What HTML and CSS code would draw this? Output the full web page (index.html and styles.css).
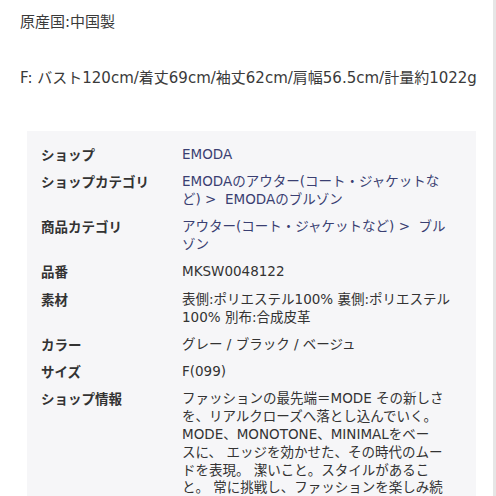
FILE: index.html
```html
<!DOCTYPE html>
<html lang="ja">
<head>
<meta charset="utf-8">
<link rel="stylesheet" href="styles.css">
</head>
<body>
<div class="page">
  <p class="note">原産国:中国製</p>
  <p class="note sizes">F: バスト120cm/着丈69cm/袖丈62cm/肩幅56.5cm/計量約1022g</p>
  <div class="spec">
    <div class="label">ショップ</div>
    <div class="value link">EMODA</div>
    <div class="label">ショップカテゴリ</div>
    <div class="value link">EMODAのアウター(コート・ジャケットな<br>ど) &gt;&nbsp; EMODAのブルゾン</div>
    <div class="label">商品カテゴリ</div>
    <div class="value link">アウター(コート・ジャケットなど) &gt;&nbsp; ブル<br>ゾン</div>
    <div class="label">品番</div>
    <div class="value">MKSW0048122</div>
    <div class="label">素材</div>
    <div class="value">表側:ポリエステル100% 裏側:ポリエステル<br>100% 別布:合成皮革</div>
    <div class="label">カラー</div>
    <div class="value">グレー / ブラック / ベージュ</div>
    <div class="label">サイズ</div>
    <div class="value">F(099)</div>
    <div class="label">ショップ情報</div>
    <div class="value">ファッションの最先端＝MODE その新しさ<br>を、リアルクローズへ落とし込んでいく。<br>MODE、MONOTONE、MINIMALをベー<br>スに、 エッジを効かせた、その時代のムー<br>ドを表現。 潔いこと。スタイルがあるこ<br>と。 常に挑戦し、ファッションを楽しみ続<br>ける。</div>
  </div>
</div>
<div class="edge"></div>
</body>
</html>
```
FILE: styles.css
```css
html, body {
  margin: 0;
  padding: 0;
  background: #ffffff;
  height: 496px;
  overflow: hidden;
}
body {
  font-family: "DejaVu Sans", "Noto Sans CJK JP", sans-serif;
  color: #333333;
}
.page {
  padding: 12px 20px 0 27px;
  width: 449px;
}
.note {
  margin: 0 0 36px -7px;
  font-size: 15px;
  line-height: 20px;
  color: #3a3a3a;
  white-space: nowrap;
}
.sizes {
  margin-bottom: 43px;
}
.spec {
  background: #f6f6f8;
  padding: 15px 20px 10px 14px;
  display: grid;
  grid-template-columns: 141px 1fr;
  row-gap: 9.5px;
  font-size: 13.5px;
  line-height: 17.8px;
}
.label {
  font-family: "Noto Sans CJK JP", sans-serif;
  font-weight: bold;
  color: #333333;
}
.value {
  color: #333333;
  white-space: nowrap;
}
.link {
  color: #3a3f72;
}
.edge {
  position: absolute;
  top: 0;
  right: 0;
  width: 3px;
  height: 496px;
  background: #e6e6e6;
}
```
